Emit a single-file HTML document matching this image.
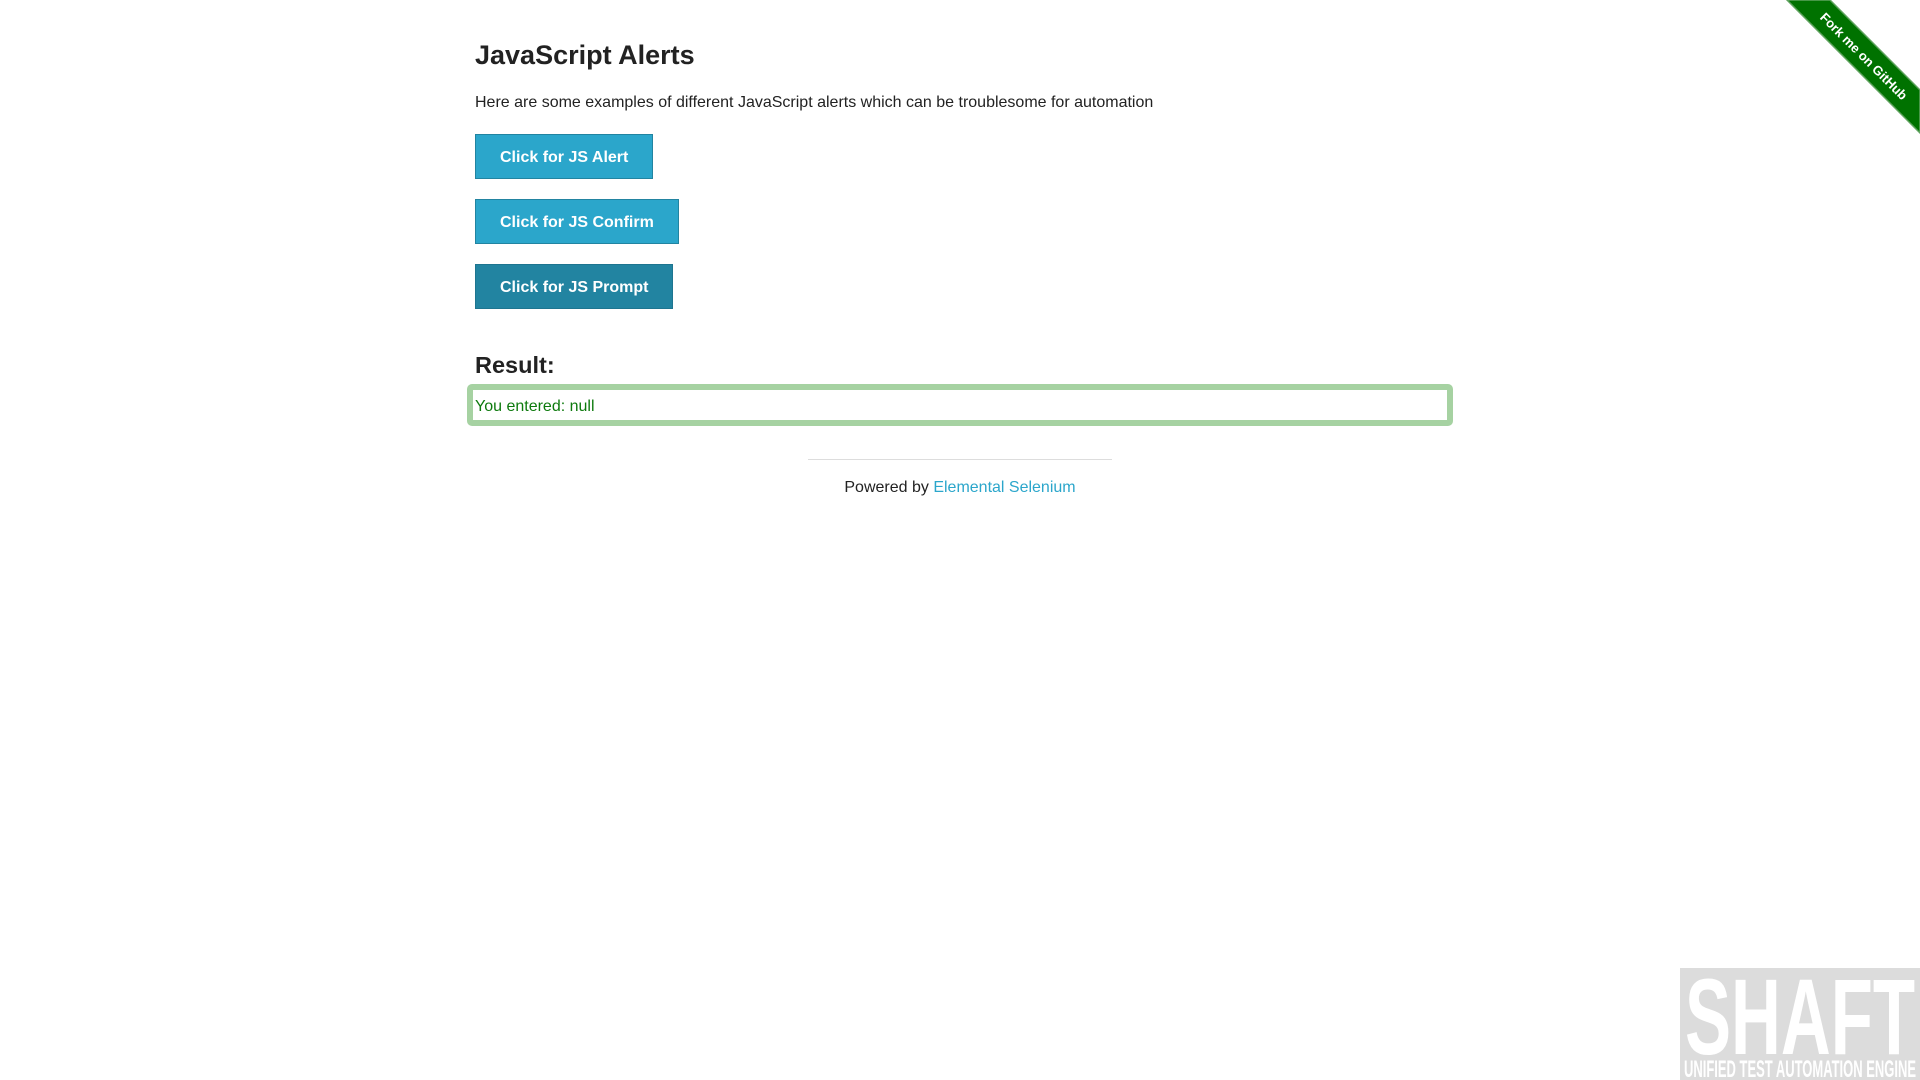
<!DOCTYPE html>
<html><head><meta charset="utf-8"><style>
html,body{margin:0;padding:0;background:#fff;width:1920px;height:1080px;overflow:hidden;font-family:"Liberation Sans",Arial,sans-serif;color:#222;}
.abs{position:absolute}
.btn{position:absolute;left:475px;height:45px;box-sizing:border-box;background:#2ba6cb;border:1px solid #2284a1;color:#fff;font-weight:bold;font-size:16px;line-height:45px;padding:0 24px;white-space:nowrap}
</style></head><body>
<div class="abs" style="left:475px;top:38px;font-size:27px;font-weight:bold;line-height:34px">JavaScript Alerts</div>
<div class="abs" style="left:475px;top:93px;font-size:16px;line-height:20px">Here are some examples of different JavaScript alerts which can be troublesome for automation</div>
<div class="btn" style="top:134px;width:178px">Click for JS Alert</div>
<div class="btn" style="top:199px;width:204px">Click for JS Confirm</div>
<div class="btn" style="top:264px;width:198px;background:#2284a1;border-color:#1e7590">Click for JS Prompt</div>
<div class="abs" style="left:475px;top:349px;font-size:23.5px;font-weight:bold;line-height:32px">Result:</div>
<div class="abs" style="left:467px;top:384px;width:986px;height:42px;box-sizing:border-box;border:6px solid #a6d2a2;border-radius:5px"></div>
<div class="abs" style="left:475px;top:397px;font-size:16px;line-height:20px;color:#0d7a0d">You entered: null</div>
<div class="abs" style="left:808px;top:459px;width:304px;height:1px;background:#ddd"></div>
<div class="abs" style="left:0;width:1920px;top:478px;text-align:center;font-size:16px;line-height:20px">Powered by <span style="color:#2ba6cb">Elemental Selenium</span></div>
<svg class="abs" style="left:1700px;top:0" width="220" height="160">
<polygon points="87,0 130,0 220,90 220,133" fill="#007200" stroke="#5fa35f" stroke-width="1.5"/>
<text x="0" y="0" transform="translate(163,57) rotate(45)" text-anchor="middle" dominant-baseline="middle" fill="#fff" font-family="Liberation Sans, sans-serif" font-size="13" font-weight="bold">Fork me on GitHub</text>
</svg>
<svg class="abs" style="left:1680px;top:968px" width="240" height="112">
<rect width="240" height="112" fill="#dcdcdc"/>
<text x="5" y="86" fill="#fff" font-family="Liberation Sans, sans-serif" font-weight="bold" font-size="108" textLength="230" lengthAdjust="spacingAndGlyphs">SHAFT</text>
<text x="4" y="109" fill="#fff" font-family="Liberation Sans, sans-serif" font-weight="bold" font-size="24" textLength="232" lengthAdjust="spacingAndGlyphs">UNIFIED TEST AUTOMATION ENGINE</text>
</svg>
</body></html>
